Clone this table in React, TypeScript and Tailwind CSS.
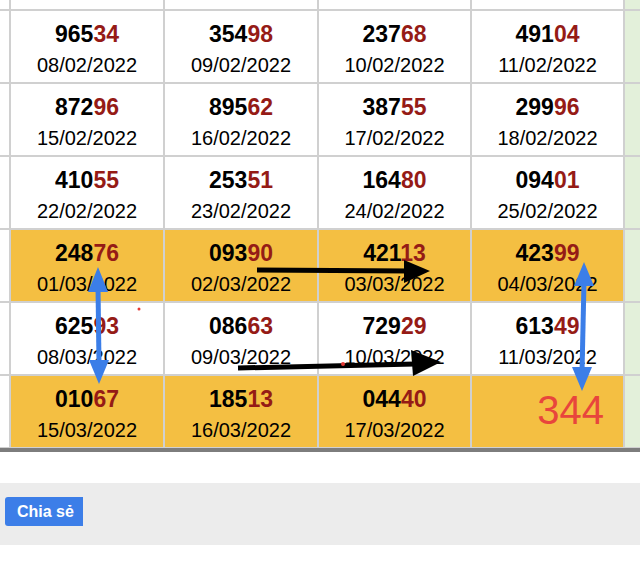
import React from "react";

type Cell = { num: string; date: string };

const rows: { yellow: boolean; cells: (Cell | null)[] }[] = [
  {
    yellow: false,
    cells: [
      { num: "96534", date: "08/02/2022" },
      { num: "35498", date: "09/02/2022" },
      { num: "23768", date: "10/02/2022" },
      { num: "49104", date: "11/02/2022" },
    ],
  },
  {
    yellow: false,
    cells: [
      { num: "87296", date: "15/02/2022" },
      { num: "89562", date: "16/02/2022" },
      { num: "38755", date: "17/02/2022" },
      { num: "29996", date: "18/02/2022" },
    ],
  },
  {
    yellow: false,
    cells: [
      { num: "41055", date: "22/02/2022" },
      { num: "25351", date: "23/02/2022" },
      { num: "16480", date: "24/02/2022" },
      { num: "09401", date: "25/02/2022" },
    ],
  },
  {
    yellow: true,
    cells: [
      { num: "24876", date: "01/03/2022" },
      { num: "09390", date: "02/03/2022" },
      { num: "42113", date: "03/03/2022" },
      { num: "42399", date: "04/03/2022" },
    ],
  },
  {
    yellow: false,
    cells: [
      { num: "62593", date: "08/03/2022" },
      { num: "08663", date: "09/03/2022" },
      { num: "72929", date: "10/03/2022" },
      { num: "61349", date: "11/03/2022" },
    ],
  },
  {
    yellow: true,
    cells: [
      { num: "01067", date: "15/03/2022" },
      { num: "18513", date: "16/03/2022" },
      { num: "04440", date: "17/03/2022" },
      null,
    ],
  },
];

function ResultCell({ cell, yellow }: { cell: Cell | null; yellow: boolean }) {
  const bg = yellow ? "bg-[#f4bf42]" : "bg-white";
  if (!cell) {
    return (
      <div className={`${bg} flex items-center justify-end pr-[19px] pb-[3px]`}>
        <span className="text-[40px] leading-none text-[#e8453c]">344</span>
      </div>
    );
  }
  return (
    <div className={`${bg} flex flex-col items-center pt-[10px]`}>
      <div className="text-[23px] font-bold leading-[26px] text-black">
        {cell.num.slice(0, 3)}
        <span className="text-[#951b16]">{cell.num.slice(3)}</span>
      </div>
      <div className="mt-[6px] text-[20px] leading-[24px] text-black">{cell.date}</div>
    </div>
  );
}

function Arrows() {
  return (
    <svg className="pointer-events-none absolute left-0 top-0" width="640" height="561">
      {/* blue double arrows */}
      <g fill="#3b7ee8" stroke="#3b7ee8">
        <line x1="98" y1="286" x2="99" y2="364" strokeWidth="5" />
        <polygon points="98,267 88,292 108,292" stroke="none" />
        <polygon points="99,384 89,360 109,360" stroke="none" />
        <line x1="584" y1="282" x2="582" y2="372" strokeWidth="5" />
        <polygon points="584,262 574,286 594,286" stroke="none" />
        <polygon points="582,391 572,367 592,367" stroke="none" />
      </g>
      {/* black arrows */}
      <g fill="#000" stroke="#000">
        <line x1="257" y1="270" x2="410" y2="271" strokeWidth="5" />
        <polygon points="430,271 404,260 404,283" stroke="none" />
        <line x1="238" y1="368" x2="415" y2="364" strokeWidth="5" />
        <polygon points="441,362 411,350 413,376" stroke="none" />
      </g>
      <circle cx="139" cy="309" r="1.5" fill="#e53935" />
      <circle cx="343" cy="364" r="2" fill="#e53935" />
    </svg>
  );
}

export default function App() {
  return (
    <div
      className="relative h-[561px] w-[640px] overflow-hidden bg-white"
      style={{ fontFamily: '"Liberation Sans", Arial, sans-serif' }}
    >
      {/* sheet */}
      <div className="grid grid-cols-[9px_152px_152px_151px_151px_15px] grid-rows-[9px_71px_71px_71px_71px_71px_71px] gap-[2px] bg-[#d0d0d0] pb-px">
        {/* partial top row */}
        <div className="bg-white" />
        <div className="bg-white" />
        <div className="bg-white" />
        <div className="bg-white" />
        <div className="bg-white" />
        <div className="bg-[#e3f0da]" />
        {rows.map((row, i) => (
          <React.Fragment key={i}>
            <div className="bg-white" />
            {row.cells.map((c, j) => (
              <ResultCell key={j} cell={c} yellow={row.yellow} />
            ))}
            <div className="bg-[#e3f0da]" />
          </React.Fragment>
        ))}
      </div>
      <div className="h-[4px] bg-[#7d7d7d]" />

      {/* footer */}
      <div className="h-[31px] bg-white" />
      <div className="h-[62px] bg-[#ececec] pt-[14px] pl-[5px]">
        <button className="h-[29px] w-[78px] rounded-l-[3px] bg-[#3c7ee8] text-left pl-[12px] text-[16px] font-bold text-white">
          Chia sẻ
        </button>
      </div>

      <Arrows />
    </div>
  );
}
